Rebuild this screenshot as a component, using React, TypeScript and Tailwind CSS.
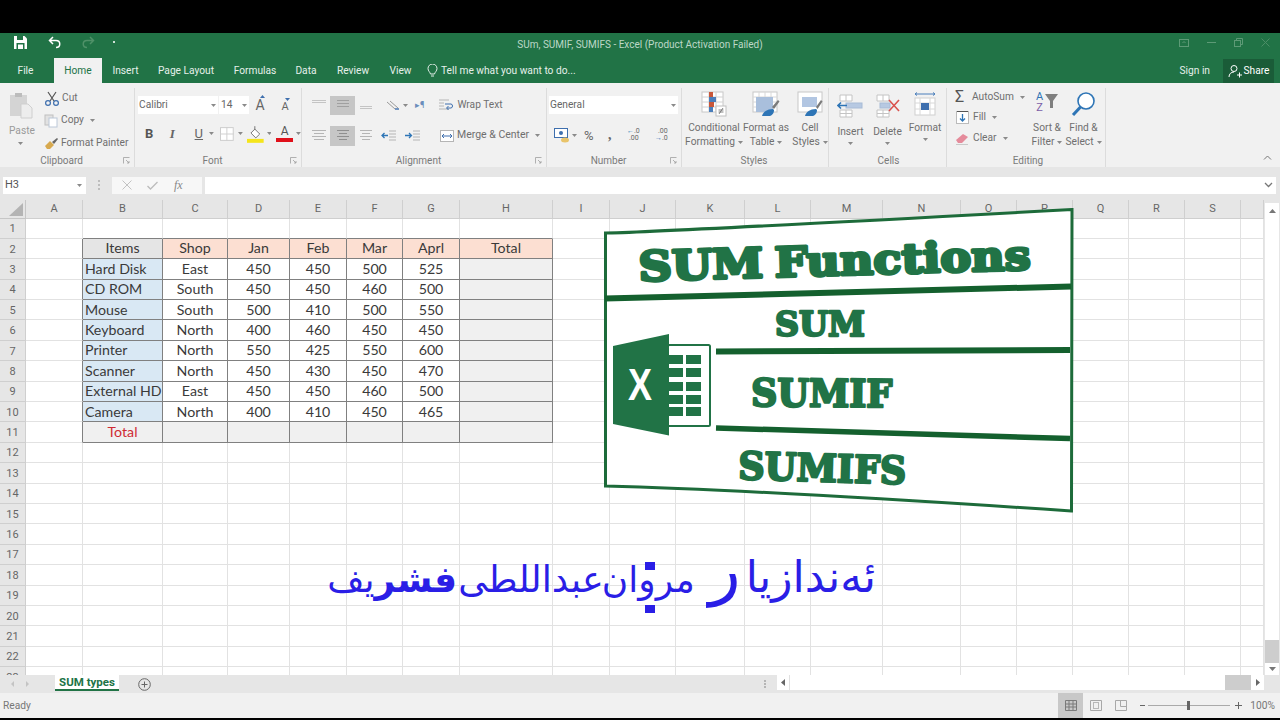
import type { ReactNode } from "react";

const columns = ["A", "B", "C", "D", "E", "F", "G", "H", "I", "J", "K", "L", "M", "N", "O", "P", "Q", "R", "S", ""];
const rowCount = 23;

const sheet: string[][] = [
  ["Items", "Shop", "Jan", "Feb", "Mar", "Aprl", "Total"],
  ["Hard Disk", "East", "450", "450", "500", "525", ""],
  ["CD ROM", "South", "450", "450", "460", "500", ""],
  ["Mouse", "South", "500", "410", "500", "550", ""],
  ["Keyboard", "North", "400", "460", "450", "450", ""],
  ["Printer", "North", "550", "425", "550", "600", ""],
  ["Scanner", "North", "450", "430", "450", "470", ""],
  ["External HD", "East", "450", "450", "460", "500", ""],
  ["Camera", "North", "400", "410", "450", "465", ""],
  ["Total", "", "", "", "", "", ""],
];

function Caret({ className = "" }: { className?: string }) {
  return (
    <svg width="5" height="3" viewBox="0 0 5 3" className={className}>
      <path d="M0 0h5L2.5 3z" fill="#8a8a8a" />
    </svg>
  );
}

function Launcher() {
  return (
    <svg width="7" height="7" viewBox="0 0 7 7" className="shrink-0">
      <path d="M.5 6.5v-6h6M3 3l3 3M6 4v2H4" fill="none" stroke="#a0a0a0" strokeWidth=".8" />
    </svg>
  );
}

function Group({ width, label, labelPad = 0, launcher, children }: { width: number; label: string; labelPad?: number; launcher?: boolean; children: ReactNode }) {
  return (
    <div className="flex flex-col h-[79px] border-r border-[#dcdcdc] shrink-0" style={{ width }}>
      <div className="flex-1 min-h-0">{children}</div>
      <div className="h-[14px] flex items-center pr-[4px] pt-[1px]">
        <span className="flex-1 text-center text-[10px] leading-none text-[#7a7a7a]" style={{ paddingLeft: labelPad }}>{label}</span>
        {launcher && <Launcher />}
      </div>
    </div>
  );
}

function SmallBtn({ icon, text, caret, className = "" }: { icon: ReactNode; text: string; caret?: boolean; className?: string }) {
  return (
    <div className={"flex items-center text-[10.2px] leading-none text-[#6f6f6f] " + className}>
      {icon}
      <span>{text}</span>
      {caret && <Caret className="ml-[6px]" />}
    </div>
  );
}

function LargeBtn({ width, icon, lines, caretBelow }: { width: number; icon: ReactNode; lines: ReactNode[]; caretBelow?: boolean }) {
  return (
    <div className="flex flex-col items-center shrink-0 text-[10.2px] leading-[14px] text-[#6f6f6f] text-center" style={{ width }}>
      <div className="h-[30px] flex items-start justify-center">{icon}</div>
      {lines.map((l, i) => (
        <div key={i} className="whitespace-nowrap flex items-center">{l}</div>
      ))}
      {caretBelow && <Caret className="mt-[3px]" />}
    </div>
  );
}

const lines3 = (ws: number[], gap: number, color: string) => (
  <svg width="16" height="14" viewBox="0 0 16 14">
    {ws.map((w, i) => (
      <rect key={i} x={(16 - w) / 2} y={1 + i * gap} width={w} height="1" fill={color} />
    ))}
  </svg>
);

function ConditionalIcon() {
  return (
    <svg width="26" height="26" viewBox="0 0 26 26">
      <rect x="1" y="1" width="21" height="20" fill="#fff" stroke="#c8c8c8" />
      <path d="M8 1v20M15 1v20M1 6h21M1 11h21M1 16h21" stroke="#d2d2d2" />
      <rect x="8" y="1" width="4" height="5" fill="#c8573a" />
      <rect x="8" y="6" width="7" height="5" fill="#4a7ebb" />
      <rect x="8" y="11" width="5" height="5" fill="#c8573a" />
      <rect x="8" y="16" width="4" height="5" fill="#4a7ebb" />
      <rect x="15" y="15" width="10" height="10" fill="#fff" stroke="#c0c0c0" />
      <path d="M17.5 19h5M17.5 21h5M22 17l-4 6" stroke="#666" strokeWidth=".8" />
    </svg>
  );
}

function TableStyleIcon() {
  return (
    <svg width="28" height="26" viewBox="0 0 28 26">
      <rect x="1" y="1" width="24" height="20" fill="#fff" stroke="#c8c8c8" />
      <path d="M1 6h24M1 11h24M1 16h24M7 1v20M13 1v20M19 1v20" stroke="#d8d8d8" />
      <rect x="4" y="6" width="17" height="15" fill="#a9bfdc" />
      <path d="M20 16l6-7 1.5 1.5-5.5 7.5z" fill="#7a7a7a" />
      <path d="M10 25c1-4 5-7 11-7l1 1c0 4-3 6-5 6z" fill="#2e75b6" />
    </svg>
  );
}

function CellStyleIcon() {
  return (
    <svg width="28" height="26" viewBox="0 0 28 26">
      <rect x="2" y="1" width="24" height="20" fill="#fff" stroke="#c8c8c8" />
      <rect x="6" y="6" width="15" height="10" fill="#b2c6e2" />
      <path d="M20 16l5-7 1.5 1.5-5 7.5z" fill="#7a7a7a" />
      <path d="M9 25c1-4 5-7 11-7l1 1c0 4-3 6-5 6z" fill="#2e75b6" />
    </svg>
  );
}

function CellsIcon({ mark }: { mark: "insert" | "delete" | "format" }) {
  if (mark === "format") {
    return (
      <svg width="24" height="28" viewBox="0 0 24 28">
        <path d="M2 2h20M2 2l2-1.5M2 2l2 1.5M22 2l-2-1.5M22 2l-2 1.5" stroke="#4a7ebb" fill="none" />
        <rect x="2" y="6" width="20" height="17" fill="#fff" stroke="#cfcfcf" />
        <path d="M7 6v17M17 6v17M2 11h20M2 17h20" stroke="#d8d8d8" />
        <rect x="8" y="11" width="8" height="7" fill="#3e6fae" />
      </svg>
    );
  }
  return (
    <svg width="28" height="28" viewBox="0 0 28 28">
      <path d="M3 3h12v6H3zM3 18h12v7H3zM9 3v6M9 18v7M3 21.5h12" fill="#fff" stroke="#c4c4c4" />
      {mark === "insert" ? (
        <>
          <rect x="9" y="11" width="16" height="5" fill="#b7c9e2" stroke="#a8bbd6" />
          <path d="M10 13.5H1M4 10.5l-3 3 3 3" fill="none" stroke="#2e75b6" strokeWidth="1.6" />
        </>
      ) : (
        <>
          <rect x="6" y="11" width="10" height="5" fill="#b7c9e2" stroke="#a8bbd6" />
          <path d="M15 8l10 11M25 8L15 19" stroke="#d9534f" strokeWidth="1.6" />
        </>
      )}
    </svg>
  );
}

function GrowFont({ size, up, className = "" }: { size: number; up: boolean; className?: string }) {
  return (
    <div className={"flex flex-col items-center " + className}>
      <svg width="5" height="3" viewBox="0 0 5 3" className="ml-[5px]">
        <path d={up ? "M0 3h5L2.500 0z" : "M0 0h5L2.500 3z"} fill="#3e6fae" />
      </svg>
      <span className="leading-none text-[#666]" style={{ fontSize: size }}>A</span>
    </div>
  );
}

function Ribbon() {
  return (
    <div className="h-[84px] bg-[#f1f1f1] flex pt-[5px] shrink-0">
      {/* Clipboard */}
      <Group width={135} label="Clipboard" launcher>
        <div className="flex">
          <div className="w-[44px] pl-[9px] pt-[4px] flex flex-col items-start shrink-0">
            <svg width="25" height="27" viewBox="0 0 25 27">
              <rect x="1" y="3" width="17" height="21" fill="#d4d4d4" />
              <rect x="6" y="1" width="7" height="4" fill="#bcbcbc" />
              <path d="M12 12h7l4 4v10H12z" fill="#ededed" stroke="#cfcfcf" />
            </svg>
            <span className="text-[10.2px] leading-none text-[#9a9a9a] mt-[7px]">Paste</span>
            <Caret className="ml-[9px] mt-[6px]" />
          </div>
          <div className="flex flex-col pt-[3px] gap-[8.500px]">
            <SmallBtn
              icon={
                <svg width="16" height="15" viewBox="0 0 16 15" className="mr-[2px]">
                  <path d="M4 1l6 9M12 1L6 10" stroke="#555" strokeWidth="1.2" />
                  <circle cx="4" cy="12" r="2.4" fill="none" stroke="#3e6fae" strokeWidth="1.2" />
                  <circle cx="12" cy="12" r="2.4" fill="none" stroke="#3e6fae" strokeWidth="1.2" />
                </svg>
              }
              text="Cut"
              className="h-[14px]"
            />
            <SmallBtn
              icon={
                <svg width="15" height="14" viewBox="0 0 15 14" className="mr-[2px]">
                  <rect x="1" y="1" width="8" height="10" fill="#e2e2e2" stroke="#c0c0c0" />
                  <rect x="5" y="4" width="8" height="9" fill="#fff" stroke="#bcc8d8" />
                </svg>
              }
              text="Copy"
              caret
              className="h-[14px]"
            />
            <SmallBtn
              icon={
                <svg width="15" height="13" viewBox="0 0 15 13" className="mr-[2px]">
                  <path d="M1 9l5-5 4 4-4 4H3z" fill="#d7a94f" />
                  <path d="M8 5l5-4 1 1-4 5z" fill="#666" />
                </svg>
              }
              text="Format Painter"
              className="h-[14px]"
            />
          </div>
        </div>
      </Group>

      {/* Font */}
      <Group width={167} label="Font" launcher>
        <div className="pl-[3px] pt-[7px] flex items-end">
          <div className="w-[80px] h-[18px] bg-white flex items-center justify-between pl-[1px] pr-[2px] text-[10.2px] text-[#666]">
            Calibri <Caret />
          </div>
          <div className="w-[30px] h-[18px] bg-white ml-[1px] flex items-center justify-between pl-[2px] pr-[2px] text-[10.2px] text-[#666]">
            14 <Caret />
          </div>
          <GrowFont size={14} up className="ml-[6px] mb-[2px]" />
          <GrowFont size={11} up={false} className="ml-[15px] mb-[2px]" />
        </div>
        <div className="pl-[10px] pt-[13px] flex items-center text-[13px] leading-none text-[#666] h-[26px]">
          <span className="w-[10px] font-bold text-[#555]">B</span>
          <span className="w-[9px] ml-[15px] italic font-['Liberation_Serif'] font-bold">I</span>
          <span className="w-[10px] ml-[16px] underline">U</span>
          <Caret className="ml-[5px]" />
          <svg width="14" height="14" viewBox="0 0 14 14" className="ml-[6px]">
            <rect x=".5" y=".5" width="13" height="13" fill="#fff" stroke="#cdcdcd" />
            <path d="M7 0v14M0 7h14" stroke="#d0d0d0" />
          </svg>
          <Caret className="ml-[4px]" />
          <svg width="17" height="18" viewBox="0 0 17 18" className="ml-[4px]">
            <path d="M4 8l4-4 5 5-4 4z" fill="#fff" stroke="#777" />
            <path d="M8 1v4" stroke="#777" />
            <rect x="0" y="14" width="17" height="4" fill="#f5e51b" />
          </svg>
          <Caret className="ml-[3px]" />
          <div className="ml-[5px] w-[17px] flex flex-col items-center">
            <span className="text-[12px] leading-[13px] text-[#555]">A</span>
            <span className="w-full h-[4px] bg-[#e0101a]" />
          </div>
          <Caret className="ml-[3px]" />
        </div>
      </Group>

      {/* Alignment */}
      <Group width={245} label="Alignment" launcher>
        <div className="pl-[9px] pt-[8px] flex items-center h-[27px]">
          {lines3([14, 14], 2, "#c4c4c4")}
          <div className="ml-[3px] w-[25px] h-[19px] bg-[#c6c6c6] flex items-center justify-center">{lines3([12, 12, 12], 3, "#a0a0a0")}</div>
          <div className="ml-[3px]">{lines3([0, 0, 0, 12, 12], 2, "#c4c4c4")}</div>
          <svg width="14" height="12" viewBox="0 0 14 12" className="ml-[12px]">
            <path d="M1 2l8 7M4 1l8 7" stroke="#9a9a9a" />
            <path d="M9 9h4" stroke="#3e6fae" strokeWidth="1.4" />
          </svg>
          <Caret className="ml-[3px]" />
          <span className="ml-[7px] text-[9px] text-[#6a8dbb] leading-none">▸¶</span>
          <svg width="15" height="13" viewBox="0 0 15 13" className="ml-[15px]">
            <path d="M0 1h10M0 4h5M0 7h5M0 10h10" stroke="#b5b5b5" />
            <path d="M6 5h6c2 0 2 4 0 4H8M9.500 7L7.500 9l2 2" fill="none" stroke="#3e6fae" />
          </svg>
          <span className="ml-[3px] text-[10.2px] leading-none text-[#6f6f6f]">Wrap Text</span>
        </div>
        <div className="pl-[9px] pt-[9px] flex items-center h-[32px]">
          {lines3([14, 10, 14, 10], 3, "#b5b5b5")}
          <div className="ml-[3px] w-[25px] h-[20px] bg-[#c6c6c6] flex items-center justify-center">{lines3([12, 8, 12, 8], 3, "#8f8f8f")}</div>
          <div className="ml-[3px]">{lines3([12, 8, 12, 8], 3, "#b5b5b5")}</div>
          <svg width="15" height="11" viewBox="0 0 15 11" className="ml-[7px]">
            <path d="M8 1h7M8 4h7M8 7h7M8 10h7" stroke="#b5b5b5" />
            <path d="M7 5.500H1M3.500 3L1 5.500 3.500 8" fill="none" stroke="#2e75b6" strokeWidth="1.3" />
          </svg>
          <svg width="15" height="11" viewBox="0 0 15 11" className="ml-[9px]">
            <path d="M8 1h7M8 4h7M8 7h7M8 10h7" stroke="#b5b5b5" />
            <path d="M0 5.500h6M4 3l2.500 2.500L4 8" fill="none" stroke="#2e75b6" strokeWidth="1.3" />
          </svg>
          <svg width="14" height="12" viewBox="0 0 14 12" className="ml-[20px]">
            <rect x=".5" y=".5" width="13" height="11" fill="#fff" stroke="#b5b5b5" />
            <path d="M2 6h10M2 6l2-2M2 6l2 2M12 6l-2-2M12 6l-2 2" fill="none" stroke="#3e6fae" />
          </svg>
          <span className="ml-[3px] text-[10.5px] leading-none text-[#6f6f6f]">Merge &amp; Center</span>
          <Caret className="ml-[6px]" />
        </div>
      </Group>

      {/* Number */}
      <Group width={135} label="Number" launcher>
        <div className="pl-[2px] pt-[8px] h-[28px]">
          <div className="w-[129px] h-[18px] bg-white flex items-center justify-between pl-[1px] pr-[2px] text-[10.2px] text-[#666]">
            General <Caret />
          </div>
        </div>
        <div className="pl-[7px] pt-[7px] flex items-center h-[31px] text-[#666]">
          <svg width="16" height="15" viewBox="0 0 16 15">
            <rect x=".5" y=".5" width="13" height="9" fill="#fff" stroke="#3e6fae" />
            <circle cx="7" cy="5" r="2" fill="#3e6fae" />
            <ellipse cx="11" cy="12" rx="4" ry="2.500" fill="#e9c46a" />
          </svg>
          <Caret className="ml-[2px]" />
          <span className="ml-[7px] w-[12px] text-[13px] leading-none">%</span>
          <span className="ml-[12px] w-[4px] font-bold text-[14px] leading-none font-['Liberation_Serif']">,</span>
          <div className="ml-[15px] text-[7px] leading-[7px] text-[#666] w-[14px]">
            <div><span className="text-[#2e75b6]">←</span>.0</div>
            <div className="pl-[2px]">.00</div>
          </div>
          <div className="ml-[14px] text-[7px] leading-[7px] text-[#666] w-[14px]">
            <div className="pl-[3px]">.00</div>
            <div><span className="text-[#2e75b6]">→</span>.0</div>
          </div>
        </div>
      </Group>

      {/* Styles */}
      <Group width={147} label="Styles" labelPad={2}>
        <div className="flex pt-[3px] pl-[3px]">
          <LargeBtn width={58} icon={<ConditionalIcon />} lines={["Conditional", <>Formatting<Caret className="ml-[3px]" /></>]} />
          <LargeBtn width={46} icon={<TableStyleIcon />} lines={["Format as", <>Table<Caret className="ml-[3px]" /></>]} />
          <LargeBtn width={42} icon={<CellStyleIcon />} lines={["Cell", <>Styles<Caret className="ml-[3px]" /></>]} />
        </div>
      </Group>

      {/* Cells */}
      <Group width={118} label="Cells" labelPad={6}>
        <div className="flex pt-[4px] pl-[3px] items-start">
          <LargeBtn width={37} icon={<CellsIcon mark="insert" />} lines={[<span className="mt-[3px]">Insert</span>]} caretBelow />
          <LargeBtn width={37} icon={<CellsIcon mark="delete" />} lines={[<span className="mt-[3px]">Delete</span>]} caretBelow />
          <LargeBtn width={38} icon={<CellsIcon mark="format" />} lines={[<span className="-mt-[1px]">Format</span>]} caretBelow />
        </div>
      </Group>

      {/* Editing */}
      <Group width={159} label="Editing" labelPad={8}>
        <div className="flex">
          <div className="w-[84px] pl-[8px] pt-[2px] flex flex-col gap-[6.500px] shrink-0">
            <SmallBtn
              icon={<span className="w-[16px] text-[16px] leading-none text-[#555] mr-[1px]">Σ</span>}
              text="AutoSum"
              caret
              className="h-[14px]"
            />
            <SmallBtn
              icon={
                <svg width="13" height="13" viewBox="0 0 13 13" className="ml-[1px] mr-[4px]">
                  <rect x=".5" y=".5" width="12" height="12" fill="#fff" stroke="#bbb" />
                  <path d="M1 .5h11" stroke="#555" />
                  <path d="M6.500 3v7M4 7.500l2.500 2.500L9 7.500" fill="none" stroke="#2e75b6" strokeWidth="1.3" />
                </svg>
              }
              text="Fill"
              caret
              className="h-[14px]"
            />
            <SmallBtn
              icon={
                <svg width="15" height="13" viewBox="0 0 15 13" className="mr-[3px]">
                  <path d="M1 8l7-6 5 3-6 6H3z" fill="#e58b9b" />
                  <path d="M1 12.500h12" stroke="#c9c9c9" />
                </svg>
              }
              text="Clear"
              caret
              className="h-[14px]"
            />
          </div>
          <div className="-ml-[2px] flex pt-[3px]">
            <LargeBtn
              width={36}
              icon={
                <div className="flex items-start w-[26px] h-[26px]">
                  <div className="flex flex-col w-[11px] text-[11px] leading-[11px] text-center">
                    <span className="text-[#2e75b6]">A</span>
                    <span className="text-[#7b5ea7]">Z</span>
                  </div>
                  <svg width="13" height="14" viewBox="0 0 13 14" className="mt-[3px]">
                    <path d="M0 0h13L8 7v7H5V7z" fill="#7f7f7f" />
                  </svg>
                </div>
              }
              lines={["Sort &", <>Filter<Caret className="ml-[3px]" /></>]}
            />
            <LargeBtn
              width={37}
              icon={
                <svg width="25" height="26" viewBox="0 0 25 26">
                  <circle cx="15" cy="10" r="8" fill="#fff" stroke="#2e75b6" strokeWidth="1.6" />
                  <path d="M9.500 16L2 24" stroke="#2e75b6" strokeWidth="3" />
                </svg>
              }
              lines={["Find &", <>Select<Caret className="ml-[3px]" /></>]}
            />
          </div>
        </div>
      </Group>

      <div className="flex-1 flex items-end justify-end pr-[8px] pb-[7px]">
        <svg width="9" height="5" viewBox="0 0 9 5">
          <path d="M1 4.500l3.500-3.500L8 4.500" fill="none" stroke="#777" />
        </svg>
      </div>
    </div>
  );
}

function cellClass(r: number, c: number) {
  // r is the sheet row (1 based), c the column index (0 = A)
  const inTable = r >= 2 && r <= 11 && c >= 1 && c <= 7;
  const right = inTable || (r >= 2 && r <= 11 && c === 0);
  const bottom = inTable || (r === 1 && c >= 1 && c <= 7);
  let bg = "bg-white";
  if (inTable) {
    if (r === 2) bg = c === 1 ? "bg-[#e5e5e5]" : "bg-[#fcdfd2]";
    else if (r === 11 || c === 7) bg = "bg-[#f0f0f0]";
    else if (c === 1) bg = "bg-[#d9e8f4]";
  }
  return [
    "min-w-0 border-r border-b overflow-hidden whitespace-nowrap flex items-center font-['Lato'] text-[14.2px] leading-none text-[#3a3a3a]",
    right ? "border-r-[#808080]" : "border-r-[#e2e2e2]",
    bottom ? "border-b-[#808080]" : "border-b-[#e2e2e2]",
    bg,
  ].join(" ");
}

function Grid() {
  const rows = Array.from({ length: rowCount }, (_, i) => i + 1);
  return (
    <div className="flex-1 min-w-0 h-[475px] overflow-hidden bg-white">
      <div className="grid grid-cols-[26px_57px_80px_65px_62px_57px_56px_57px_93px_57px_66px_69px_66px_72px_78px_56px_56px_56px_56px_56px_23px] grid-rows-[18.5px] auto-rows-[20.4px]">
        <div className="bg-[#e6e6e6] border-r border-b border-[#c6c6c6] flex items-end justify-end p-[2px]">
          <svg width="14" height="13" viewBox="0 0 14 13"><path d="M14 0v13H0z" fill="#b4b4b4" /></svg>
        </div>
        {columns.map((col, i) => (
          <div key={i} className="bg-[#e6e6e6] border-r border-b border-[#cfcfcf] flex items-center justify-center text-[11px] text-[#666] leading-none">
            {col}
          </div>
        ))}
        {rows.map((r) => (
          <div key={r} className="contents">
            <div className="bg-[#e6e6e6] border-r border-b border-[#cfcfcf] flex items-center justify-center pt-[1px] text-[11px] text-[#666] leading-none">
              {r}
            </div>
            {columns.map((_, c) => {
              const value = r >= 2 && r <= 11 && c >= 1 && c <= 7 ? sheet[r - 2][c - 1] : "";
              const leftAlign = c === 1 && r >= 3 && r <= 10;
              const isRedTotal = r === 11 && c === 1;
              return (
                <div key={c} className={cellClass(r, c) + " " + (leftAlign ? "justify-start pl-[2px]" : "justify-center") + (isRedTotal ? " !text-[#cf2a33]" : "")}>
                  {value}
                </div>
              );
            })}
          </div>
        ))}
      </div>
    </div>
  );
}

function LogoArt() {
  return (
    <svg width="480" height="310" viewBox="600 205 480 310" className="absolute left-[600px] top-[205px]">
      <path d="M605.500 233 Q640 233 1072 209.500 L1071.500 511 Q760 490 605.500 486 Z" fill="#fff" stroke="#1d6b3a" strokeWidth="3" />
      <path d="M605 298.500L1071 286.500" stroke="#14602e" strokeWidth="6" />
      <path d="M716 351.500L1070 350" stroke="#14602e" strokeWidth="6" />
      <path d="M716 428L1070 438.500" stroke="#14602e" strokeWidth="5.500" />
      <g fontFamily="'DejaVu Serif', serif" fontWeight="700" fill="#217346" stroke="#217346" strokeLinejoin="round">
        <text x="639" y="281" fontSize="41" wordSpacing="-4" strokeWidth="3.200" textLength="392" lengthAdjust="spacingAndGlyphs" transform="rotate(-1.7 639 281)">SUM Functions</text>
        <text x="775" y="336" fontSize="34" strokeWidth="2.400" textLength="90" lengthAdjust="spacingAndGlyphs">SUM</text>
        <text x="751" y="406" fontSize="38" strokeWidth="2.400" textLength="141" lengthAdjust="spacingAndGlyphs" transform="rotate(.5 751 406)">SUMIF</text>
        <text x="738" y="479" fontSize="38" strokeWidth="2.400" textLength="168" lengthAdjust="spacingAndGlyphs" transform="rotate(1.7 738 479)">SUMIFS</text>
      </g>
      {/* excel logo */}
      <rect x="668" y="345" width="42" height="81" rx="1.500" fill="#fff" stroke="#217346" strokeWidth="2" />
      {[355, 368, 382, 395, 407].map((y) => (
        <g key={y} fill="#217346">
          <rect x="669" y={y} width="14" height="9" />
          <rect x="686" y={y} width="15" height="9" />
        </g>
      ))}
      <path d="M613 346L669 334V435.500L613 424Z" fill="#217346" />
      <text x="640" y="400" textAnchor="middle" fontFamily="'Liberation Sans', sans-serif" fontWeight="700" fontSize="44" fill="#fff" textLength="24" lengthAdjust="spacingAndGlyphs">X</text>
    </svg>
  );
}

function Overlay() {
  return (
    <div className="absolute left-[300px] top-[553px] w-[600px] h-[70px]">
      <div dir="rtl" className="absolute right-[24px] -top-[8px] flex items-baseline font-['DejaVu_Sans'] leading-[50px] text-[#2a1ee6] whitespace-nowrap">
        <span className="text-[44px]">ئەندازیا</span>
        <span className="text-[66px] mr-[5px] leading-[50px]">ر</span>
        <span className="text-[36px] mr-[14px]">مروان</span>
        <span className="text-[36.500px] -mr-[2px]">عبداللطی</span>
        <span className="text-[36px] mr-[1px]"><span className="font-bold">فشر</span>یف</span>
      </div>
      <span className="absolute left-[345px] top-[9px] w-[10px] h-[8px] bg-[#2a1ee6]" />
      <span className="absolute left-[345px] top-[52px] w-[10px] h-[8px] bg-[#2a1ee6]" />
    </div>
  );
}

export default function App() {
  return (
    <div className="relative w-[1280px] h-[720px] overflow-hidden bg-black font-['Roboto',sans-serif]">
      <div className="h-[33px] bg-black" />

      {/* title bar */}
      <div className="h-[25px] bg-[#217346] relative flex items-start pt-[3px] pl-[14px]">
        <svg width="13" height="13" viewBox="0 0 13 13">
          <path d="M0 0h10.500L13 2.500V13H0z" fill="#fff" />
          <rect x="3" y="0" width="6" height="4" fill="#217346" />
          <rect x="2.500" y="7" width="8" height="6" fill="#217346" />
          <rect x="4" y="8.500" width="5" height="4.500" fill="#fff" />
        </svg>
        <svg width="14" height="13" viewBox="0 0 14 13" className="ml-[21px]">
          <path d="M5 1L1.500 4.500 5 8M2 4.500h6c5 0 5 7 0 7" fill="none" stroke="#fff" strokeWidth="1.500" />
        </svg>
        <svg width="14" height="13" viewBox="0 0 14 13" className="ml-[19px]">
          <path d="M9 1l3.500 3.500L9 8M12 4.500H6c-5 0-5 7 0 7" fill="none" stroke="#4f9168" strokeWidth="1.500" />
        </svg>
        <span className="ml-[18px] mt-[5px] w-[2px] h-[2px] bg-[#cfe0d6]" />
        <span className="absolute left-0 right-0 top-[5px] text-center text-[10px] leading-[14px] text-[#bdd8c8] pointer-events-none">SUm, SUMIF, SUMIFS - Excel (Product Activation Failed)</span>
        <div className="ml-auto flex items-center gap-[18px] pr-[10px] pt-[2px]">
          <svg width="10" height="8" viewBox="0 0 10 8"><rect x=".5" y=".5" width="9" height="7" fill="none" stroke="#5d9a76" /><path d="M3.500 4L5 2.500 6.500 4" fill="none" stroke="#5d9a76" /></svg>
          <span className="w-[9px] h-[1px] bg-[#5d9a76]" />
          <svg width="9" height="9" viewBox="0 0 9 9"><rect x=".5" y="2.500" width="6" height="6" fill="none" stroke="#5d9a76" /><path d="M2.500 2.500v-2h6v6h-2" fill="none" stroke="#5d9a76" /></svg>
          <svg width="9" height="9" viewBox="0 0 9 9"><path d="M.5.500l8 8M8.500.500l-8 8" stroke="#4c8d66" /></svg>
        </div>
      </div>

      {/* tabs */}
      <div className="h-[25px] bg-[#217346] flex items-stretch text-[10.2px] text-[#e5f0ea]">
        <div className="w-[51px] flex items-center justify-center">File</div>
        <div className="w-[3px]" />
        <div className="w-[48px] bg-[#f1f1f1] text-[#217346] flex items-center justify-center">Home</div>
        <div className="w-[47px] flex items-center justify-center">Insert</div>
        <div className="w-[74px] flex items-center justify-center">Page Layout</div>
        <div className="w-[64px] flex items-center justify-center">Formulas</div>
        <div className="w-[38px] flex items-center justify-center">Data</div>
        <div className="w-[56px] flex items-center justify-center">Review</div>
        <div className="w-[39px] flex items-center justify-center">View</div>
        <div className="ml-[7px] flex items-center gap-[3px]">
          <svg width="11" height="13" viewBox="0 0 11 13">
            <path d="M3.500 10C3 8 1 7 1 4.500a4.500 4.500 0 019 0C10 7 8 8 7.500 10zM4 12h3" fill="none" stroke="#e5f0ea" />
          </svg>
          Tell me what you want to do...
        </div>
        <div className="ml-auto flex items-center pr-[6px]">
          <span className="mr-[13px]">Sign in</span>
          <div className="w-[51px] h-[24px] bg-[#1a5c38] flex items-center justify-center gap-[2px] text-white">
            <svg width="14" height="14" viewBox="0 0 14 14">
              <circle cx="6" cy="4.500" r="3" fill="none" stroke="#fff" />
              <path d="M1 13c0-3 2-5 5-5M9 11h5M11.500 8.500v5" fill="none" stroke="#fff" />
            </svg>
            Share
          </div>
        </div>
      </div>

      <Ribbon />

      {/* formula bar */}
      <div className="h-[33px] bg-[#e6e6e6] flex items-center pt-[3px] pl-[3px] pr-[4px]">
        <div className="w-[83px] h-[17px] bg-white flex items-center justify-between pl-[2px] pr-[4px] text-[11px] text-[#555]">
          H3 <Caret />
        </div>
        <div className="w-[26px] flex flex-col items-center gap-[2px]">
          <span className="w-[2px] h-[2px] bg-[#bdbdbd]" />
          <span className="w-[2px] h-[2px] bg-[#bdbdbd]" />
          <span className="w-[2px] h-[2px] bg-[#bdbdbd]" />
        </div>
        <div className="w-[90px] h-[17px] bg-[#f7f7f7] flex items-center pl-[10px]">
          <svg width="10" height="10" viewBox="0 0 10 10"><path d="M.5.500l9 9M9.500.500l-9 9" stroke="#c2c2c2" /></svg>
          <svg width="11" height="9" viewBox="0 0 11 9" className="ml-[15px]"><path d="M.5 5l3 3 7-7" fill="none" stroke="#bcbcbc" strokeWidth="1.300" /></svg>
          <span className="ml-[16px] font-['Liberation_Serif'] italic text-[12px] leading-none text-[#888]">fx</span>
        </div>
        <div className="ml-[3px] flex-1 h-[17px] bg-white flex items-center justify-end pr-[3px]">
          <svg width="9" height="6" viewBox="0 0 9 6"><path d="M1 1l3.500 3.500L8 1" fill="none" stroke="#777" strokeWidth="1.300" /></svg>
        </div>
      </div>

      {/* sheet area */}
      <div className="flex h-[475px] bg-[#e6e6e6]">
        <Grid />
        <div className="w-[16px] flex flex-col items-center pt-[3px] pb-0 shrink-0">
          <div className="w-[14px] h-[15px] bg-white flex items-center justify-center">
            <svg width="7" height="4" viewBox="0 0 7 4"><path d="M0 4h7L3.500 0z" fill="#777" /></svg>
          </div>
          <div className="w-[14px] flex-1 bg-white" />
          <div className="w-[14px] h-[23px] bg-[#cdcdcd]" />
          <div className="w-[14px] h-[12px] bg-white flex items-center justify-center">
            <svg width="7" height="4" viewBox="0 0 7 4"><path d="M0 0h7L3.500 4z" fill="#777" /></svg>
          </div>
        </div>
      </div>

      {/* sheet tabs */}
      <div className="h-[18px] bg-[#e6e6e6] flex items-stretch">
        <div className="w-[55px] flex items-center pl-[11px] gap-[12px]">
          <svg width="3" height="6" viewBox="0 0 3 6"><path d="M3 0v6L0 3z" fill="#c4c4c4" /></svg>
          <svg width="3" height="6" viewBox="0 0 3 6"><path d="M0 0v6l3-3z" fill="#c4c4c4" /></svg>
        </div>
        <div className="w-[64px] h-[16px] bg-white border-b-2 border-[#217346] flex items-center justify-center pt-[1px] text-[11.500px] font-bold text-[#217346]">SUM types</div>
        <div className="ml-[19px] flex items-center">
          <svg width="13" height="13" viewBox="0 0 13 13">
            <circle cx="6.500" cy="6.500" r="5.800" fill="none" stroke="#666" />
            <path d="M6.500 3.500v6M3.500 6.500h6" stroke="#666" />
          </svg>
        </div>
        <div className="ml-[613px] flex flex-col justify-center gap-[1px]">
          <span className="w-[2px] h-[2px] bg-[#b5b5b5]" />
          <span className="w-[2px] h-[2px] bg-[#b5b5b5]" />
          <span className="w-[2px] h-[2px] bg-[#b5b5b5]" />
        </div>
        <div className="ml-[11px] w-[487px] h-[15px] flex bg-white">
          <div className="w-[12px] flex items-center justify-center"><svg width="4" height="7" viewBox="0 0 4 7"><path d="M4 0v7L0 3.500z" fill="#666" /></svg></div>
          <div className="w-[1px] bg-[#e0e0e0]" />
          <div className="flex-1" />
          <div className="w-[26px] bg-[#cdcdcd]" />
          <div className="w-[13px] flex items-center justify-center"><svg width="4" height="7" viewBox="0 0 4 7"><path d="M0 0v7l4-3.500z" fill="#666" /></svg></div>
        </div>
      </div>

      {/* status bar */}
      <div className="h-[25px] bg-[#f1f1f1] flex items-center text-[10.2px] text-[#777]">
        <span className="ml-[3px]">Ready</span>
        <div className="ml-auto flex items-center h-full">
          <div className="w-[25px] h-full bg-[#c8c8c8] flex items-center justify-center">
            <svg width="12" height="11" viewBox="0 0 12 11"><path d="M.5.500h11v10H.5zM4 .5v10M8 .5v10M.5 4h11M.5 7h11" fill="none" stroke="#7a7a7a" /></svg>
          </div>
          <svg width="12" height="11" viewBox="0 0 12 11" className="ml-[7px]"><path d="M.5.500h11v10H.5z" fill="none" stroke="#a8a8a8" /><rect x="3.500" y="2.500" width="5" height="6" fill="none" stroke="#b8b8b8" /></svg>
          <svg width="12" height="11" viewBox="0 0 12 11" className="ml-[13px]"><path d="M.5.500h11v10H.5zM5.500.5v6H11" fill="none" stroke="#a8a8a8" /></svg>
          <span className="ml-[13px] w-[5px] h-[1.500px] bg-[#666]" />
          <div className="ml-[3px] relative w-[82px] h-[1px] bg-[#aaa] flex items-center">
            <span className="ml-[39px] w-[3px] h-[9px] bg-[#666]" />
          </div>
          <svg width="7" height="7" viewBox="0 0 7 7" className="ml-[5px]"><path d="M3.500 0v7M0 3.500h7" stroke="#666" /></svg>
          <span className="ml-[8px] mr-[5px]">100%</span>
        </div>
      </div>
      <div className="h-[2px] bg-black" />

      <LogoArt />
      <Overlay />
    </div>
  );
}
